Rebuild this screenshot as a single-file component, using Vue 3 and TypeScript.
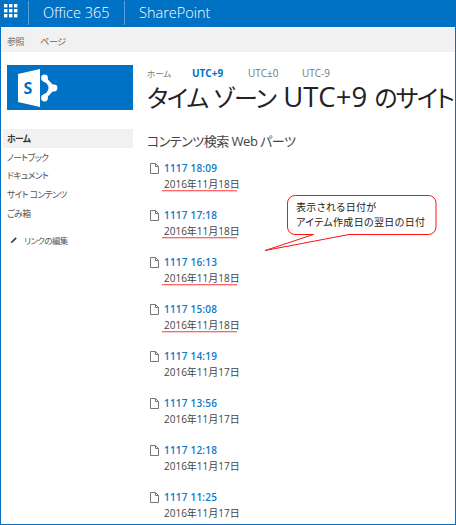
<script setup lang="ts">
const nav: string[] = ['ノートブック', 'ドキュメント', 'サイト コンテンツ', 'ごみ箱']
const items: { time: string; date: string; marked: boolean }[] = [
  { time: '1117 18:09', date: '2016年11月18日', marked: true },
  { time: '1117 17:18', date: '2016年11月18日', marked: true },
  { time: '1117 16:13', date: '2016年11月18日', marked: true },
  { time: '1117 15:08', date: '2016年11月18日', marked: true },
  { time: '1117 14:19', date: '2016年11月17日', marked: false },
  { time: '1117 13:56', date: '2016年11月17日', marked: false },
  { time: '1117 12:18', date: '2016年11月17日', marked: false },
  { time: '1117 11:25', date: '2016年11月17日', marked: false },
]
</script>

<template>
  <div class="page">
    <header class="suite">
      <div class="waffle">
        <svg width="14" height="14" viewBox="0 0 14 14" fill="#fff">
          <rect x="0" y="0" width="3.4" height="3.4" /><rect x="5" y="0" width="3.4" height="3.4" /><rect x="10" y="0" width="3.4" height="3.4" />
          <rect x="0" y="5" width="3.4" height="3.4" /><rect x="5" y="5" width="3.4" height="3.4" /><rect x="10" y="5" width="3.4" height="3.4" />
          <rect x="0" y="10" width="3.4" height="3.4" /><rect x="5" y="10" width="3.4" height="3.4" /><rect x="10" y="10" width="3.4" height="3.4" />
        </svg>
      </div>
      <div class="suite-cell office">Office 365</div>
      <div class="suite-cell sp">SharePoint</div>
    </header>
    <div class="ribbon">
      <span>参照</span>
      <span>ページ</span>
    </div>
    <div class="body">
      <aside class="side">
        <div class="logo">
          <svg width="40" height="38" viewBox="0 0 40 38">
            <path d="M26.5 9 L36 19 L26.5 29 Z" fill="#fff" stroke="#fff" stroke-width="3" stroke-linejoin="round" />
            <circle cx="26.5" cy="9" r="3.4" fill="#fff" />
            <circle cx="36" cy="19" r="3.4" fill="#fff" />
            <circle cx="26.5" cy="29" r="3.4" fill="#fff" />
            <circle cx="24" cy="19" r="6.5" fill="#0072c6" />
            <path d="M0 5 L22 0 V38 L0 33 Z" fill="#fff" />
            <text x="5.5" y="25" class="logo-s">S</text>
          </svg>
        </div>
        <nav class="nav">
          <div class="nav-item active">ホーム</div>
          <div v-for="n in nav" :key="n" class="nav-item">{{ n }}</div>
          <div class="edit">
            <svg width="8" height="8" viewBox="0 0 11 11"><path d="M1 10 L2 7.2 L7.6 1.6 L9.4 3.4 L3.8 9 Z" fill="#444" /></svg>
            <span>リンクの編集</span>
          </div>
        </nav>
      </aside>
      <main class="main">
        <div class="tabs">
          <span class="tab-home">ホーム</span>
          <span class="cur">UTC+9</span>
          <span>UTC±0</span>
          <span>UTC-9</span>
        </div>
        <h1 class="title"><span class="kana">タイム ゾーン</span> UTC+9 <span class="kana tail">のサイト</span></h1>
        <h2 class="part">コンテンツ検索 Web パーツ</h2>
        <ul class="list">
          <li v-for="it in items" :key="it.time" class="row">
            <svg class="doc" width="9" height="11" viewBox="0 0 9 11" fill="none" stroke="#777" stroke-width="1">
              <path d="M0.5 0.5 H5.5 L8.5 3.5 V10.5 H0.5 Z M5.5 0.5 V3.5 H8.5" />
            </svg>
            <div class="row-text">
              <div class="time">{{ it.time }}</div>
              <div class="date" :class="{ marked: it.marked }">{{ it.date }}</div>
            </div>
          </li>
        </ul>
      </main>
    </div>
    <div class="callout">
      <svg class="callout-shape" width="175" height="58" viewBox="0 0 175 58">
        <path d="M31.5 0.5 H164.5 a7.5 7.5 0 0 1 7.5 7.5 V32 a7.5 7.5 0 0 1 -7.5 7.5 H85 L1 55.5 L49.5 39.5 H31 a7.5 7.5 0 0 1 -7.5 -7.5 V8 a7.5 7.5 0 0 1 7.5 -7.5 Z" fill="#fff" stroke="#f11" stroke-width="1" />
      </svg>
      <div class="callout-text">表示される日付が<br />アイテム作成日の翌日の日付</div>
    </div>
  </div>
</template>

<style scoped>
.page {
  position: relative;
  width: 456px;
  height: 525px;
  box-sizing: border-box;
  overflow: hidden;
  background: #fff;
  border-left: 1px solid #0a6fc2;
  border-right: 1px solid #0a6fc2;
  border-bottom: 1px solid #0a6fc2;
  font-family: "Open Sans", "Noto Sans CJK JP", sans-serif;
  font-feature-settings: "palt";
  color: #444;
}
.suite {
  display: flex;
  height: 27px;
  margin: 0 -1px;
  background: #0072c6;
  color: #fff;
  border-bottom: 1px solid #fff;
  font-size: 14.5px;
  font-weight: 300;
}
.waffle {
  width: 28px;
  flex: none;
  display: flex;
  align-items: flex-start;
  padding: 4px 0 0 4px;
  box-sizing: border-box;
}
.suite-cell {
  display: flex;
  align-items: center;
  line-height: 20px;
  height: 24px;
  margin-top: 1px;
}
.office {
  width: 97px;
  padding-left: 14px;
  box-sizing: border-box;
  border-left: 1px solid #5aa3da;
  border-right: 1px solid #5aa3da;
}
.sp {
  padding-left: 14px;
}
.ribbon {
  display: flex;
  gap: 16px;
  height: 24px;
  align-items: center;
  padding: 3px 0 0 6px;
  box-sizing: border-box;
  background: #f1f1f1;
  font-size: 9px;
  letter-spacing: -0.4px;
  color: #666;
}
.body {
  display: flex;
}
.side {
  width: 146px;
  flex: none;
  padding: 13px 0 0 6px;
  box-sizing: border-box;
}
.logo {
  width: 126px;
  height: 45px;
  background: #0072c6;
  display: flex;
  align-items: center;
  padding-left: 11px;
  box-sizing: border-box;
}
.logo-s {
  font-family: "Open Sans", sans-serif;
  font-weight: 700;
  font-size: 16px;
  fill: #0072c6;
}
.nav {
  margin-top: 19px;
  width: 126px;
  font-size: 8.8px;
  letter-spacing: -0.6px;
  color: #555;
}
.nav-item {
  height: 18.7px;
  line-height: 20px;
}
.nav-item.active {
  background: #f1f1f1;
  font-weight: 700;
  color: #333;
  margin-left: -4px;
  padding-left: 4px;
}
.edit {
  display: flex;
  align-items: center;
  gap: 6px;
  margin-top: 10px;
  padding-left: 3px;
  height: 16px;
  font-size: 8.5px;
}
.main {
  flex: 1;
  min-width: 0;
  padding-top: 14px;
  white-space: nowrap;
}
.tabs {
  display: flex;
  height: 14px;
  align-items: center;
  font-size: 10px;
  color: #777;
}
.tabs span:nth-child(1) { width: 45px; }
.tabs span:nth-child(2) { width: 56px; color: #0072c6; font-weight: 700; }
.tabs span:nth-child(3) { width: 54px; }
.tab-home {
  font-size: 8.5px;
}
.title {
  margin: -1px 0 0;
  font-size: 27.5px;
  line-height: 36px;
  font-weight: 400;
  color: #222;
}
.kana {
  font-size: 24px;
  letter-spacing: -1px;
}
.kana.tail {
  letter-spacing: -1.6px;
}
.part {
  margin: 15px 0 0;
  font-size: 13px;
  letter-spacing: -0.5px;
  line-height: 20px;
  font-weight: 400;
  color: #444;
}
.list {
  list-style: none;
  margin: 10px 0 0;
  padding: 0 0 0 3px;
}
.row {
  display: flex;
  gap: 5px;
  height: 47px;
}
.doc {
  margin-top: 2px;
  flex: none;
}
.row-text {
  font-size: 10px;
  line-height: 15px;
}
.time {
  color: #0f78c8;
  font-weight: 600;
  letter-spacing: 0.2px;
}
.date {
  margin-top: 1px;
  color: #444;
  white-space: nowrap;
}
.date.marked {
  position: relative;
}
.date.marked::after {
  content: "";
  position: absolute;
  left: -2px;
  width: 75px;
  top: 13px;
  height: 1px;
  background: #f66;
  box-shadow: 0 1px 0 #fcc;
}
.callout {
  position: absolute;
  left: 263px;
  top: 195px;
  width: 175px;
  height: 58px;
}
.callout-shape {
  position: absolute;
  left: 0;
  top: 0;
}
.callout-text {
  position: absolute;
  left: 32px;
  top: 5px;
  font-size: 10px;
  letter-spacing: 0.35px;
  line-height: 15px;
  color: #222;
  white-space: nowrap;
}
</style>
